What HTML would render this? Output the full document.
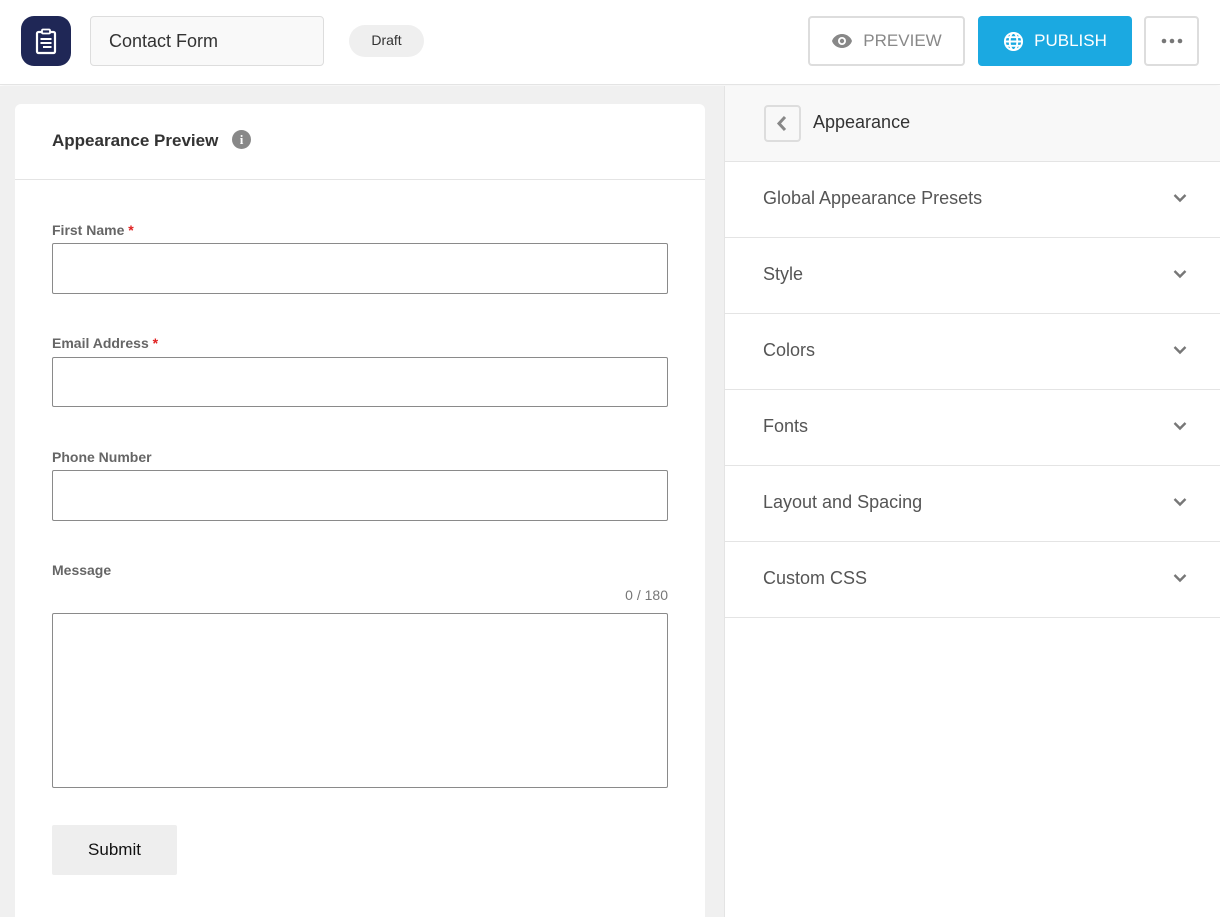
<!DOCTYPE html>
<html><head><meta charset="utf-8"><style>
*{box-sizing:border-box;margin:0;padding:0}
body{width:1220px;height:917px;overflow:hidden;font-family:"Liberation Sans",Arial,sans-serif;background:#fff;position:relative}
.abs{position:absolute}
.top{left:0;top:0;width:1220px;height:85px;background:#fff;border-bottom:1px solid #e4e4e4;box-shadow:0 1px 4px rgba(0,0,0,.06)}
.logo{left:21px;top:16px;width:50px;height:50px;border-radius:13px;background:#1f2756}
.title{left:90px;top:16px;width:234px;height:50px;border:1px solid #ddd;border-radius:4px;background:#f9f9f9;font-size:18px;color:#333;padding:14px 0 0 18px}
.draft{left:349px;top:25px;width:75px;height:32px;border-radius:16px;background:#efefef;font-size:14px;color:#333;text-align:center;line-height:30px}
.btn{top:16px;height:50px;border-radius:4px;font-size:17px;display:flex;align-items:center;justify-content:center;gap:10px}
.left{left:0;top:86px;width:724px;height:831px;background:#f0f0f0}
.card{left:15px;top:104px;width:690px;height:813px;background:#fff;border-radius:6px 6px 0 0}
.lbl{font-size:14px;font-weight:bold;color:#666;left:52px}
.req{color:#e02020}
.inp{left:52px;width:616px;border:1px solid #8a8a8a;border-radius:2px;background:#fff}
.right{left:724px;top:86px;width:496px;height:831px;background:#fff;border-left:1px solid #e4e4e4}
.row{position:absolute;left:0;width:496px;height:76px;border-bottom:1px solid #e4e4e4;font-size:18px;color:#555;padding:26px 0 0 38px}
.row svg{position:absolute;right:34px;top:31px}
</style></head><body>
<div class="abs top"></div>
<div class="abs logo"><svg width="50" height="50" viewBox="0 0 50 50"><rect x="16" y="16" width="18" height="21" rx="1.5" fill="none" stroke="#fff" stroke-width="2.2"/><rect x="21" y="13.5" width="8" height="4" rx="1" fill="#1f2756" stroke="#fff" stroke-width="1.8"/><rect x="19.5" y="22" width="11" height="2" fill="#fff"/><rect x="19.5" y="26" width="11" height="2" fill="#fff"/><rect x="22" y="30" width="8.5" height="2" fill="#fff"/></svg></div>
<div class="abs title">Contact Form</div>
<div class="abs draft">Draft</div>
<div class="abs btn" style="left:808px;width:157px;border:2px solid #ddd;color:#888"><svg width="22" height="16" viewBox="0 0 22 16"><path d="M11 1C6 1 2 4.5 1 8c1 3.5 5 7 10 7s9-3.5 10-7c-1-3.5-5-7-10-7z" fill="#888"/><circle cx="11" cy="8" r="4" fill="#fff"/><circle cx="11" cy="8" r="2.2" fill="#888"/></svg>PREVIEW</div>
<div class="abs btn" style="left:978px;width:154px;background:#1ba9e1;color:#fff"><svg width="21" height="21" viewBox="0 0 22 22" fill="none" stroke="#fff" stroke-width="2"><circle cx="11" cy="11" r="9"/><ellipse cx="11" cy="11" rx="4" ry="9"/><path d="M2 11h18M3.5 6.5h15M3.5 15.5h15"/></svg>PUBLISH</div>
<div class="abs btn" style="left:1144px;width:55px;border:2px solid #ddd"><svg width="22" height="6"><circle cx="3" cy="3" r="2.3" fill="#777"/><circle cx="11" cy="3" r="2.3" fill="#777"/><circle cx="19" cy="3" r="2.3" fill="#777"/></svg></div>

<div class="abs left"></div>
<div class="abs card"></div>
<div class="abs" style="left:52px;top:131px;font-size:17px;font-weight:bold;color:#333">Appearance Preview</div>
<div class="abs" style="left:232px;top:130px;width:19px;height:19px;border-radius:50%;background:#888;color:#fff;font-size:13px;font-weight:bold;text-align:center;line-height:19px;font-family:'Liberation Serif',serif">i</div>
<div class="abs" style="left:15px;top:179px;width:690px;height:1px;background:#e4e4e4"></div>
<div class="abs lbl" style="top:222px">First Name <span class="req">*</span></div>
<div class="abs inp" style="top:243px;height:51px"></div>
<div class="abs lbl" style="top:335px">Email Address <span class="req">*</span></div>
<div class="abs inp" style="top:357px;height:50px"></div>
<div class="abs lbl" style="top:449px">Phone Number</div>
<div class="abs inp" style="top:470px;height:51px"></div>
<div class="abs lbl" style="top:562px">Message</div>
<div class="abs" style="left:600px;width:68px;top:587px;text-align:right;font-size:14px;color:#777">0 / 180</div>
<div class="abs inp" style="top:613px;height:175px"></div>
<div class="abs" style="left:52px;top:825px;width:125px;height:50px;background:#eee;border-radius:2px;font-size:17px;color:#111;text-align:center;line-height:50px">Submit</div>

<div class="abs right">
<div class="abs" style="left:0;top:0;width:496px;height:76px;background:#f8f8f8;border-bottom:1px solid #e4e4e4"></div>
<div class="abs" style="left:39px;top:19px;width:37px;height:37px;border:2px solid #ddd;border-radius:4px;background:#f8f8f8"><svg width="33" height="33" viewBox="0 0 33 33"><path d="M19 10l-6 6.5 6 6.5" fill="none" stroke="#888" stroke-width="3"/></svg></div>
<div class="abs" style="left:88px;top:26px;font-size:18px;color:#333">Appearance</div>
<div class="row" style="top:76px">Global Appearance Presets<svg width="14" height="10"><path d="M1.5 2l5.5 5.5 5.5-5.5" fill="none" stroke="#777" stroke-width="2.4"/></svg></div>
<div class="row" style="top:152px">Style<svg width="14" height="10"><path d="M1.5 2l5.5 5.5 5.5-5.5" fill="none" stroke="#777" stroke-width="2.4"/></svg></div>
<div class="row" style="top:228px">Colors<svg width="14" height="10"><path d="M1.5 2l5.5 5.5 5.5-5.5" fill="none" stroke="#777" stroke-width="2.4"/></svg></div>
<div class="row" style="top:304px">Fonts<svg width="14" height="10"><path d="M1.5 2l5.5 5.5 5.5-5.5" fill="none" stroke="#777" stroke-width="2.4"/></svg></div>
<div class="row" style="top:380px">Layout and Spacing<svg width="14" height="10"><path d="M1.5 2l5.5 5.5 5.5-5.5" fill="none" stroke="#777" stroke-width="2.4"/></svg></div>
<div class="row" style="top:456px">Custom CSS<svg width="14" height="10"><path d="M1.5 2l5.5 5.5 5.5-5.5" fill="none" stroke="#777" stroke-width="2.4"/></svg></div>
</div>
</body></html>
